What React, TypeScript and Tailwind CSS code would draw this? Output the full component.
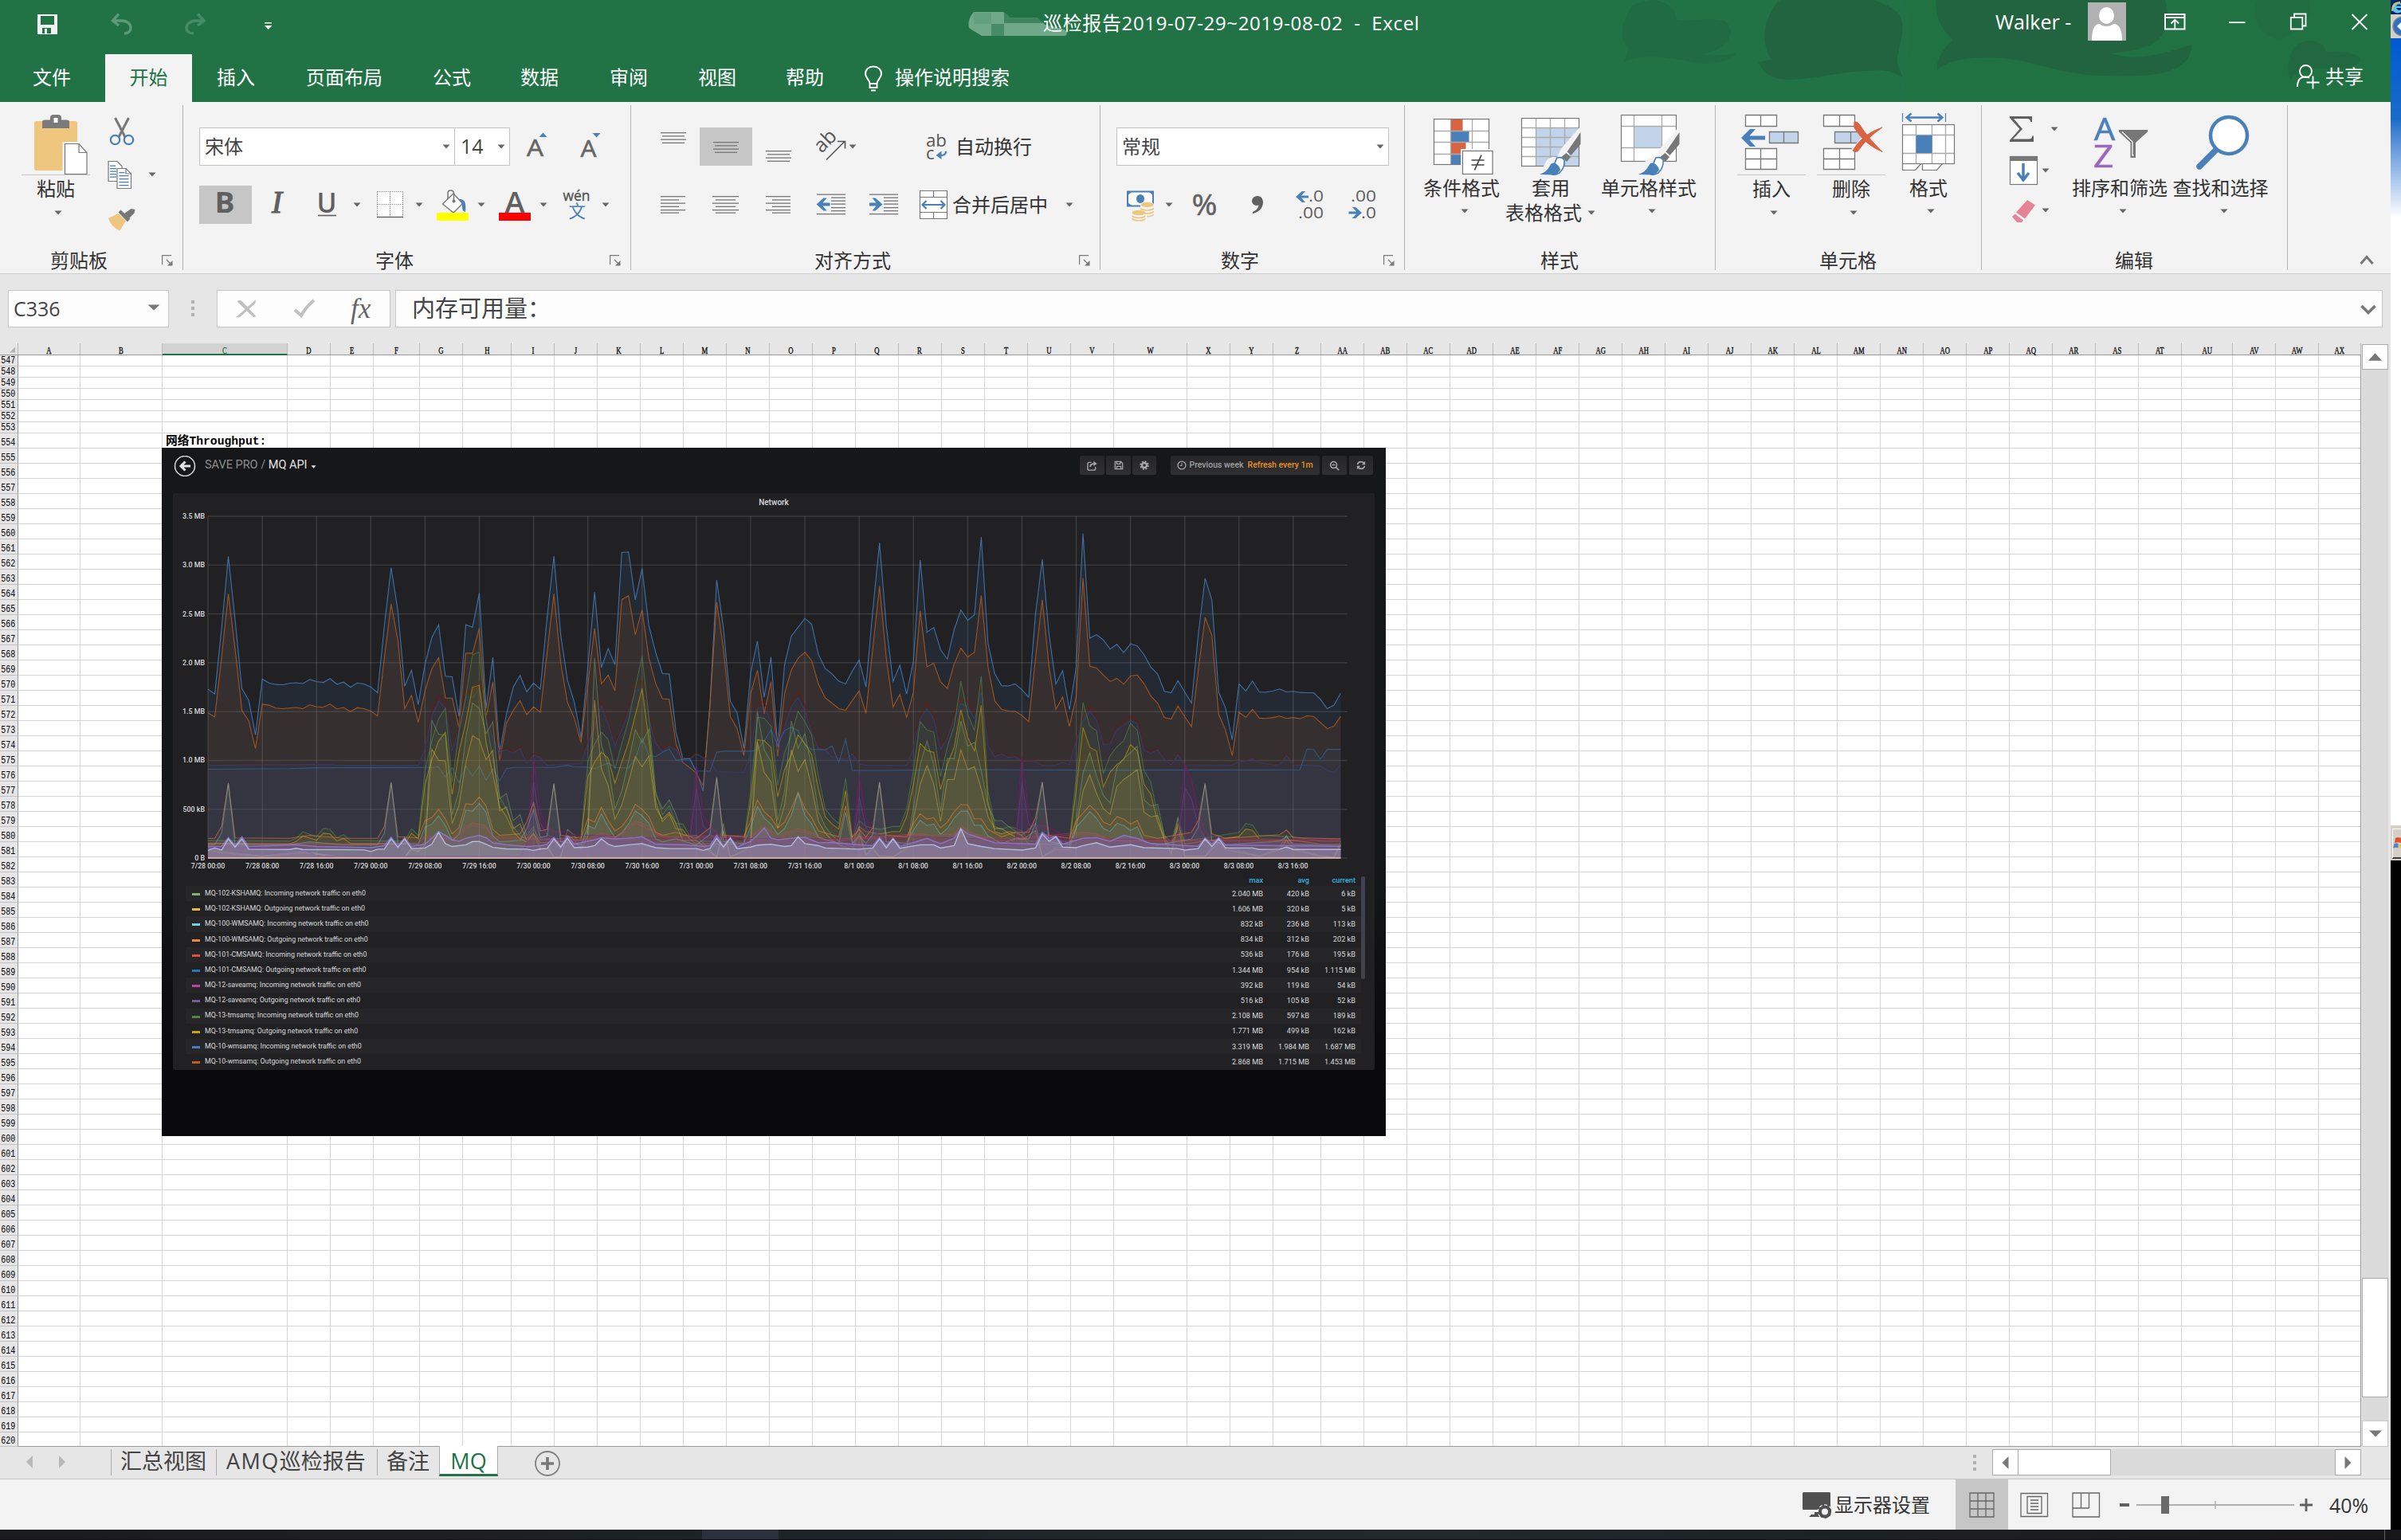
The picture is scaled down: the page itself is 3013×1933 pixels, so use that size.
import React from "react";

type Kids = { children?: React.ReactNode };

/* ---------- shared helpers ---------- */

function Ic({ b, className = "", children }: { b: string; className?: string } & Kids) {
  const [, , w, h] = b.split(" ");
  return (
    <svg viewBox={b} width={w} height={h} className={"block shrink-0 " + className} fill="none">
      {children}
    </svg>
  );
}

function Arrow({ className = "" }: { className?: string }) {
  return (
    <svg viewBox="0 0 12 6" width="12" height="6" className={"block shrink-0 " + className}>
      <path d="M1.5 0.5h9L6 5.5z" fill="#666" />
    </svg>
  );
}

function Lines({ x, ys, w, color = "#777" }: { x: number[]; ys: number[]; w: number[]; color?: string }) {
  return (
    <>
      {ys.map((y, i) => (
        <rect key={i} x={x[i % x.length]} y={y} width={w[i % w.length]} height={1.3} fill={color} />
      ))}
    </>
  );
}

function Launcher({ className = "" }: { className?: string }) {
  return (
    <svg viewBox="0 0 14 14" width="14" height="14" className={"block shrink-0 " + className} fill="none">
      <path d="M0.6 12V0.7H12" stroke="#777" strokeWidth="1.2" />
      <path d="M6 6l6 6" stroke="#777" strokeWidth="1.2" />
      <path d="M13.5 7v6.5H7z" fill="#777" />
    </svg>
  );
}

function Separator() {
  return <div className="h-[207px] w-px shrink-0 bg-[#b4b4b4]" />;
}

function Group({ width, label, labelClass, launcher, children }: { width: string; label: string; labelClass: string; launcher?: string } & Kids) {
  return (
    <section className={"flex h-[211px] shrink-0 flex-col " + width}>
      <div className="h-[180px]">{children}</div>
      <div className="flex h-[29px] items-center">
        <span className={"whitespace-nowrap " + labelClass}>{label}</span>
        {launcher && <Launcher className={launcher} />}
      </div>
    </section>
  );
}

/* ---------- title bar and tabs ---------- */

function TitleArt() {
  return (
    <svg className="absolute left-[2000px] top-0 h-[128px] w-[1000px]" viewBox="0 0 1548 384" preserveAspectRatio="none">
      <path d="M600 0C640 120 590 220 610 384H1548V0z" fill="#20703f" opacity=".45" />
      <path d="M75 20C50 90 50 150 68 185L58 235C90 200 150 215 190 235C230 250 265 230 278 200C250 210 225 212 210 205C270 180 275 110 255 80C220 60 170 90 160 70C160 20 130 0 110 0C95 5 85 10 75 20z" fill="#21663f" opacity=".6" />
      <path d="M352 20C328 90 325 160 345 225L320 235C330 280 350 305 390 299C440 295 470 270 555 265C580 268 590 280 600 292L590 240C585 200 610 120 595 60C585 30 560 10 545 0H362z" fill="#22633f" opacity=".9" />
      <path d="M665 0C662 60 675 110 698 150C680 180 665 220 667 264C690 225 730 215 780 217C850 222 900 285 1010 286C1110 290 1160 260 1161 170C1130 185 1090 215 1050 215C1020 212 1010 205 1005 200C1090 190 1130 140 1110 0z" fill="#22633f" opacity=".9" />
      <path d="M1352 300C1345 240 1350 160 1388 153C1412 155 1420 175 1422 195C1460 190 1490 205 1490 225C1485 260 1440 262 1410 256C1380 260 1360 280 1352 300z" fill="#22633f" opacity=".7" />
      <path d="M1290 0C1275 60 1290 130 1330 150C1370 120 1400 90 1390 0z" fill="#22633f" opacity=".3" />
    </svg>
  );
}

function TitleBar() {
  return (
    <div className="relative flex h-[68px]">
      <Ic b="45 10 30 40" className="ml-[45px] mt-[10px]">
        <path d="M47 18h25v25H47zM51 20v11h17V20zM53 35v7h3v-6h3v6h5v-7z" fill="#f2f2f2" fillRule="evenodd" />
      </Ic>
      <Ic b="135 10 35 40" className="ml-[60px] mt-[10px]">
        <path d="M149 17.5L141.500 26L149 32M142 26h10c9 0 12 5 12 9c0 4-3 7-8 7" stroke="#5c9a78" strokeWidth="3.4" />
      </Ic>
      <Ic b="230 10 35 40" className="ml-[60px] mt-[10px]">
        <path d="M248 17.500L256 26L248 32M256 26h-10c-8 0-12 5-12 9c0 4 3 7 9 7" stroke="#468c66" strokeWidth="3.4" />
      </Ic>
      <Ic b="330 10 16 40" className="ml-[65px] mt-[10px]">
        <path d="M332 28h9v1.500h-9zM332 32h9.500l-4.700 5z" fill="#fff" />
      </Ic>
      <svg viewBox="0 0 125 34" width="125" height="34" className="ml-[868px] mt-[13px] block shrink-0">
        <path d="M8 2H45L52 9H85L98 18L122 24C126 28 125 30 123 32H18L8 26L2 22C0 14 4 6 8 2z" fill="#6fa98a" />
        <path d="M46 2L54 9H88L95 16H60L46 16z" fill="#3e8560" />
        <rect x="30" y="17" width="16" height="15" fill="#478b67" />
        <rect x="8" y="3" width="22" height="14" fill="#62a07f" />
      </svg>
      <div className="-ml-[30px] mt-[11px] h-[36px] whitespace-pre text-[24px] leading-[36px] tracking-[0.65px] text-white">
        巡检报告2019-07-29~2019-08-02{"  -  "}Excel
      </div>
      <div className="absolute left-[2504px] top-0 flex text-white">
        <span className="mt-[9px] w-[116px] text-[25px] leading-[36px]">Walker -</span>
        <Ic b="2620 3 48 48" className="mt-[3px]">
          <rect x="2620" y="3" width="48" height="48" fill="#b1b1b1" />
          <ellipse cx="2643.500" cy="19.500" rx="9.500" ry="10.500" fill="#fff" />
          <path d="M2625 51c0-14 3-21 10-21c4 4 13 4 17 0c8 0 11 8 11 21z" fill="#fff" />
        </Ic>
        <Ic b="2712 10 34 34" className="ml-[44px] mt-[10px]">
          <path d="M2717 18h24.500v18.500H2717zM2717 22h24.500" stroke="#fff" strokeWidth="2" />
          <path d="M2729.300 36V25M2724.500 29.500l4.800-4.800l4.800 4.800" stroke="#fff" strokeWidth="1.800" />
        </Ic>
        <Ic b="2790 10 34 34" className="ml-[44px] mt-[10px]">
          <path d="M2797 28.200h20.500" stroke="#fff" strokeWidth="1.800" />
        </Ic>
        <Ic b="2868 10 34 34" className="ml-[44px] mt-[10px]">
          <path d="M2874.800 21.800h14.500v14.700h-14.500zM2879 21.500v-4h14.500v15h-4" stroke="#fff" strokeWidth="1.800" />
        </Ic>
        <Ic b="2944 10 34 34" className="ml-[42px] mt-[10px]">
          <path d="M2951.500 18l19 19M2970.500 18l-19 19" stroke="#fff" strokeWidth="1.800" />
        </Ic>
      </div>
    </div>
  );
}

function TabBar() {
  return (
    <div className="relative flex h-[60px] text-[24px] leading-[57px] text-white [&>span]:whitespace-nowrap">
      <span className="ml-[41px] w-[91px]">文件</span>
      <span className="h-[60px] w-[109px] bg-[#f3f3f3] text-center text-[#217346]">开始</span>
      <span className="ml-[31px] w-[112px]">插入</span>
      <span className="w-[159px]">页面布局</span>
      <span className="w-[110px]">公式</span>
      <span className="w-[112px]">数据</span>
      <span className="w-[111px]">审阅</span>
      <span className="w-[110px]">视图</span>
      <span className="w-[96px]">帮助</span>
      <Ic b="1082 80 28 38" className="mt-[12px]">
        <path d="M1091.500 105c0-5-5.500-6.500-5.500-12.500c0-5 4-9 10-9s10 4 10 9c0 6-5.500 7.500-5.500 12.500zM1091.500 105v5h9v-5" stroke="#fff" strokeWidth="2" />
        <path d="M1093 113.500h6" stroke="#fff" strokeWidth="2" />
      </Ic>
      <span className="ml-[13px]">操作说明搜索</span>
      <Ic b="2878 78 36 38" className="absolute left-[2878px] top-[10px]">
        <circle cx="2893.500" cy="89.500" r="7.500" stroke="#fff" strokeWidth="1.900" />
        <path d="M2883 109c0-8 3-12.500 10-12.500c2 0 4 .5 5 1.200M2894.500 103.500h16M2902.500 95.500v16" stroke="#fff" strokeWidth="1.900" />
      </Ic>
      <span className="absolute left-[2918px] top-0 leading-[55px]">共享</span>
    </div>
  );
}

/* ---------- ribbon ---------- */

function ClipboardGroup() {
  return (
    <Group width="w-[229px]" label="剪贴板" labelClass="ml-[63px]" launcher="ml-[68px]">
      <div className="flex">
        <div className="ml-[27px] mt-[8px] flex w-[86px] flex-col items-center">
          <Ic b="27 140 86 80">
            <rect x="43" y="152" width="54" height="62" rx="2.500" fill="#eec67e" />
            <path d="M53 153q0-2.500 3-2.500h7v-3q0-3.500 4-3.500h6q4 0 4 3.500v3h7q3 0 3 2.500v8H53z" fill="#7a7a7a" />
            <rect x="67.500" y="148" width="5" height="6" fill="#fff" />
            <path d="M80 179.500h20l10 12V219H80z" fill="#fff" stroke="#f3f3f3" strokeWidth="3" />
            <path d="M81.500 180.500H99l10 11V218.500H81.500zM99 180.500v11h10" fill="#fff" stroke="#777" strokeWidth="1.200" />
            <path d="M27 219.500h86" stroke="#c8c8c8" strokeWidth="1" />
          </Ic>
          <span className="-mt-px h-[36px] leading-[36px]">粘贴</span>
          <Arrow className="ml-[6px] mt-[9px]" />
        </div>
        <div className="ml-[20px] flex flex-col">
          <Ic b="133 140 38 50" className="mt-[8px]">
            <path d="M144.500 148l12.500 24M161.500 148l-12.500 24" stroke="#777" strokeWidth="3" />
            <ellipse cx="144.500" cy="175.500" rx="5.700" ry="5.700" stroke="#4a80b8" strokeWidth="2.200" />
            <ellipse cx="161.500" cy="175.500" rx="5.700" ry="5.700" stroke="#4a80b8" strokeWidth="2.200" />
          </Ic>
          <div className="mt-[4px] flex items-center">
            <Ic b="133 194 38 50">
              <path d="M136 202.500h11l6 6V227.500H136z" fill="#fff" stroke="#777" strokeWidth="1.200" />
              <Lines x={[138]} ys={[207.5, 211, 214.500, 218, 221.500]} w={[7, 8, 8, 8, 8]} color="#4a80b8" />
              <path d="M147 211.500h11l6.500 6.500V236.500H147z" fill="#fff" stroke="#777" strokeWidth="1.200" />
              <path d="M158 211.500v6.500h6" stroke="#777" strokeWidth="1.200" />
              <Lines x={[149.500]} ys={[216, 220, 224, 228, 232]} w={[7, 12, 12, 12, 12]} color="#4a80b8" />
            </Ic>
            <Arrow className="ml-[14px]" />
          </div>
          <Ic b="133 250 38 50" className="mt-[6px]">
            <path d="M136 274l12-6l10 9l-7.500 12.500c-6-2-12-8-14.500-15.500z" fill="#eec67e" />
            <path d="M148.500 266.500l3-3l12 11l-3.500 4z" fill="#777" />
            <path d="M156 268l8.500-6l5 1l-1 4.500l-7 7z" fill="#777" />
          </Ic>
        </div>
      </div>
    </Group>
  );
}

function FontGroup() {
  return (
    <Group width="w-[561px]" label="字体" labelClass="ml-[241px]" launcher="ml-[246px]">
      <div className="flex h-[76px] items-center pt-[28px]">
        <div className="ml-[20px] flex h-[48px] w-[321px] items-center border border-[#c3c3c3] bg-white pl-[6px] text-[24px] text-[#444]">
          宋体
          <Arrow className="ml-auto mr-[4px]" />
        </div>
        <div className="-ml-px flex h-[48px] w-[70px] items-center border border-[#c3c3c3] bg-white pl-[7px] text-[25px] text-[#444]">
          14
          <Arrow className="ml-auto mr-[4px]" />
        </div>
        <Ic b="655 160 40 48" className="ml-[15px]">
          <text x="661" y="196" fontSize="30" fill="#666" textLength="21" lengthAdjust="spacingAndGlyphs" stroke="#666" strokeWidth=".6">A</text>
          <path d="M676.500 172l5-5.500l5 5.500z" fill="#4a80b8" />
        </Ic>
        <Ic b="722 160 40 48" className="ml-[27px]">
          <text x="728.500" y="197" fontSize="29" fill="#666" textLength="20" lengthAdjust="spacingAndGlyphs" stroke="#666" strokeWidth=".6">A</text>
          <path d="M743.500 167h10l-5 5.500z" fill="#4a80b8" />
        </Ic>
      </div>
      <div className="mt-[25px] flex h-[48px] items-center">
        <div className="ml-[20px] flex h-[48px] w-[66px] items-center justify-center bg-[#c6c6c6]">
          <Ic b="250 233 66 48">
            <text x="269.500" y="266.500" fontSize="36" fontWeight="700" fill="#606060" textLength="25" lengthAdjust="spacingAndGlyphs">B</text>
          </Ic>
        </div>
        <Ic b="330 233 36 48" className="ml-[14px]">
          <text x="341" y="267" fontSize="39" fontStyle="italic" fontFamily="Liberation Serif" fill="#606060" stroke="#606060" strokeWidth="1.200">I</text>
        </Ic>
        <Ic b="395 225 32 56" className="-mt-[8px] ml-[29px]">
          <text x="397.500" y="266.500" fontSize="35" fontWeight="600" fill="#606060" textLength="25" lengthAdjust="spacingAndGlyphs">U</text>
          <path d="M399 270.500h23" stroke="#606060" strokeWidth="1.600" />
        </Ic>
        <Arrow className="ml-[15px]" />
        <Ic b="472 233 36 48" className="ml-[18px]">
          <rect x="473.500" y="240.500" width="32" height="32" fill="#fff" />
          <path d="M473.500 240.500h32M473.500 240.500v32M505.500 240.500v32M489.500 240.500v32M473.500 256.500h32" stroke="#888" strokeWidth="1.100" strokeDasharray="1.300 1.300" />
          <path d="M473 272.500h33" stroke="#666" strokeWidth="1.500" />
        </Ic>
        <Arrow className="ml-[12px]" />
        <Ic b="546 233 44 48" className="ml-[14px]">
          <path d="M569 243l11.500 12.500l-11.500 11.500l-13.500-11z" fill="#fff" stroke="#777" strokeWidth="1.400" />
          <path d="M562 250v-8q0-3 3.500-3t4 3v9" stroke="#777" strokeWidth="1.500" />
          <circle cx="569.500" cy="252.500" r="2" fill="#777" />
          <path d="M576 250c8 0 9 5 8 16c-5-1-4-7-4-10z" fill="#4a80b8" />
          <rect x="548" y="267" width="40" height="10" fill="#ff0" />
        </Ic>
        <Arrow className="ml-[8px]" />
        <Ic b="624 225 44 56" className="-mt-[8px] ml-[14px]">
          <text x="633.500" y="267" fontSize="36" fontWeight="600" fill="#606060" textLength="25" lengthAdjust="spacingAndGlyphs">A</text>
          <rect x="626" y="267" width="40" height="10" fill="red" />
        </Ic>
        <Arrow className="ml-[8px]" />
        <Ic b="704 225 40 56" className="-mt-[8px] ml-[16px]">
          <text x="706.500" y="251.500" fontSize="18" fill="#555" textLength="34" lengthAdjust="spacingAndGlyphs" stroke="#555" strokeWidth=".4">wén</text>
          <text x="713.500" y="272.500" fontSize="21.500" fill="#4a80b8">文</text>
        </Ic>
        <Arrow className="ml-[10px]" />
      </div>
    </Group>
  );
}

function AlignGroup() {
  const step = [0, 4.2, 8.5, 12.7];
  const xs = [829, 831, 829, 831];
  const ws = [32, 28, 32, 28];
  const five = [246, 250.3, 254.5, 258.700, 263, 266.500];
  return (
    <Group width="w-[588px]" label="对齐方式" labelClass="ml-[230px]" launcher="ml-[236px]">
      <div className="flex h-[76px] items-center pt-[28px]">
        <Ic b="827 160 36 48" className="ml-[35px]">
          <Lines x={xs} ys={step.map((s) => s + 166)} w={ws} />
        </Ic>
        <div className="ml-[15px] flex h-[48px] w-[66px] justify-center bg-[#c6c6c6]">
          <Ic b="827 160 36 48">
            <Lines x={xs} ys={step.map((s) => s + 178)} w={ws} />
          </Ic>
        </div>
        <Ic b="827 160 36 48" className="ml-[15px]">
          <Lines x={xs} ys={step.map((s) => s + 189)} w={ws} />
        </Ic>
        <Ic b="1022 160 41 48" className="ml-[27px]">
          <text x="0" y="0" fontSize="25" fill="#555" transform="translate(1031 193) rotate(-45)">ab</text>
          <path d="M1037 200.500l23-23M1051 177.500h9.500v9" stroke="#555" strokeWidth="1.600" />
        </Ic>
        <Arrow className="ml-px" />
        <Ic b="1160 160 32 48" className="ml-[84px]">
          <text x="1162" y="183.500" fontSize="22" fill="#555" textLength="26" lengthAdjust="spacingAndGlyphs">ab</text>
          <text x="1162" y="199.500" fontSize="22" fill="#555">c</text>
          <path d="M1187 190q0 5-6 5h-3" stroke="#4a80b8" strokeWidth="2.200" />
          <path d="M1181.500 189.500v10.500l-7-5z" fill="#4a80b8" />
        </Ic>
        <span className="ml-[7px] whitespace-nowrap">自动换行</span>
      </div>
      <div className="mt-[25px] flex h-[48px] items-center">
        <Ic b="827 233 36 48" className="ml-[35px]">
          <Lines x={[829]} ys={five} w={[31, 23]} />
        </Ic>
        <Ic b="892 233 36 48" className="ml-[29px]">
          <Lines x={[894, 898]} ys={five} w={[33, 25]} />
        </Ic>
        <Ic b="959 233 36 48" className="ml-[31px]">
          <Lines x={[961, 969]} ys={five} w={[31, 23]} />
        </Ic>
        <Ic b="1023 233 40 48" className="ml-[28px]">
          <Lines x={[1025, 1043, 1043, 1043, 1043, 1043, 1025]} ys={[243.500, 247.500, 251.500, 255.500, 260, 264, 268]} w={[36, 18, 18, 18, 18, 18, 36]} />
          <path d="M1024.500 256.500l9-8h4l-5 6h9v4h-9l5 6h-4z" fill="#4a80b8" />
        </Ic>
        <Ic b="1089 233 40 48" className="ml-[26px]">
          <Lines x={[1091, 1109, 1109, 1109, 1109, 1109, 1091]} ys={[243.500, 247.500, 251.500, 255.500, 260, 264, 268]} w={[36, 18, 18, 18, 18, 18, 36]} />
          <path d="M1107.500 256.500l-9-8h-4l5 6h-8.500v4h8.500l-5 6h4z" fill="#4a80b8" />
        </Ic>
        <Ic b="1152 233 39 48" className="ml-[23px]">
          <path d="M1154.500 239.500h34v35h-34zM1154.500 247.500h34M1154.500 266.500h34M1171.500 239.500v8M1171.500 266.500v8" fill="#fff" stroke="#777" strokeWidth="1.200" />
          <path d="M1158 257h27M1162.500 252l-5 5l5 5M1180.500 252l5 5l-5 5" stroke="#4a80b8" strokeWidth="2.200" />
        </Ic>
        <span className="ml-[4px] whitespace-nowrap">合并后居中</span>
        <Arrow className="ml-[21px]" />
      </div>
    </Group>
  );
}

function NumberGroup() {
  return (
    <Group width="w-[381px]" label="数字" labelClass="ml-[151px]" launcher="ml-[156px]">
      <div className="flex h-[76px] items-center pt-[28px]">
        <div className="ml-[20px] flex h-[48px] w-[342px] items-center border border-[#c3c3c3] bg-white pl-[6px] text-[24px] text-[#444]">
          常规
          <Arrow className="ml-auto mr-[4px]" />
        </div>
      </div>
      <div className="mt-[25px] flex h-[48px] items-center">
        <Ic b="1412 233 38 48" className="ml-[31px]">
          <rect x="1415" y="240.500" width="32" height="18" fill="#fff" stroke="#4a80b8" strokeWidth="2" />
          <path d="M1415 240.500h5l-5 4zM1447 240.500h-5l5 4zM1415 258.500h5l-5-4z" fill="#4a80b8" stroke="#4a80b8" />
          <ellipse cx="1431" cy="249.500" rx="5" ry="5.500" fill="#4a80b8" />
          <path d="M1431 256.500a8 3 0 0 1 17 0v12a8 3 0 0 1-17 0z" fill="#f3f3f3" />
          <ellipse cx="1439.500" cy="257" rx="8" ry="3" fill="#eec67e" />
          <path d="M1431.500 261a8 3 0 0 0 16 0M1431.500 265a8 3 0 0 0 16 0M1439.500 271.500a8 3 0 0 0 8-2.500" stroke="#eec67e" strokeWidth="1.600" />
          <ellipse cx="1429" cy="267" rx="8.500" ry="3.300" fill="#eec67e" />
          <path d="M1421 270.500a8 3 0 0 0 16 0M1421 274a8 3 0 0 0 16 0" stroke="#eec67e" strokeWidth="1.600" />
        </Ic>
        <Arrow className="ml-[11px]" />
        <Ic b="1494 233 36 48" className="ml-[21px]">
          <text x="1495.500" y="270" fontSize="37" fill="#606060" textLength="32" lengthAdjust="spacingAndGlyphs" stroke="#606060" strokeWidth=".5">%</text>
        </Ic>
        <Ic b="1566 233 24 48" className="ml-[36px]">
          <path d="M1571 252a7 6 0 0 1 7-6c5 0 7 4 7 8c0 8-7 13-13 14v-2c4-1.500 7-4.500 7.500-8.500c-4 1.500-8.500-1-8.500-5.500z" fill="#606060" />
        </Ic>
        <Ic b="1624 225 40 56" className="-mt-[8px] ml-[34px]">
          <text x="1642" y="253" fontSize="20" fill="#606060" textLength="19" lengthAdjust="spacingAndGlyphs">.0</text>
          <text x="1629" y="273.500" fontSize="20" fill="#606060" textLength="32" lengthAdjust="spacingAndGlyphs">.00</text>
          <path d="M1626 247l8-7h4l-5 5.500h9v3h-9l5 5.500h-4z" fill="#4a80b8" />
        </Ic>
        <Ic b="1690 225 40 56" className="-mt-[8px] ml-[26px]">
          <text x="1695" y="253" fontSize="20" fill="#606060" textLength="32" lengthAdjust="spacingAndGlyphs">.00</text>
          <text x="1708" y="273.500" fontSize="20" fill="#606060" textLength="19" lengthAdjust="spacingAndGlyphs">.0</text>
          <path d="M1709 267l-8-7h-4l5 5.500h-9.500v3h9.500l-5 5.500h4z" fill="#4a80b8" />
        </Ic>
      </div>
    </Group>
  );
}

function Brush() {
  return (
    <g>
      <path d="M55 19l2.500 2l-14 28l-8 13l-5 9q-6 9-32 10q8-6 12-15q3-8 11-9l4 1l6-12z" fill="#f3f3f3" />
      <path d="M55.500 26V41L43.500 55l-5-4.500z" fill="#777" />
      <path d="M37.500 52l5.500 5l-5 6l-6.500-6z" fill="#777" />
      <path d="M26 58q7-1.500 9 3q1 9-6 16q-5 3-9 2q2-14 6-21z" fill="#fff" stroke="#4a80b8" strokeWidth="1.600" />
      <path d="M4 79q9-3 13-11q2-5 7-3q5 3 6 8q-3 6-10 6.500z" fill="#4a80b8" />
    </g>
  );
}

function StylesGroup() {
  return (
    <Group width="w-[389px]" label="样式" labelClass="ml-[170px]">
      <div className="flex pt-[8px]">
        <div className="ml-[20px] flex w-[102px] flex-col items-center">
          <Ic b="1794 140 80 80">
            <rect x="1799.500" y="149.500" width="69" height="57" fill="#fff" />
            <rect x="1820.500" y="150" width="15" height="14" fill="#da6341" />
            <rect x="1820.500" y="165" width="23" height="13" fill="#4a80b8" />
            <rect x="1820.500" y="179" width="19" height="14" fill="#da6341" />
            <rect x="1820.500" y="194" width="14" height="12" fill="#4a80b8" />
            <path d="M1820.500 149.500v57M1847.500 149.500v57M1799.500 164.500h69M1799.500 178.500h69M1799.500 193.500h69" stroke="#aaa" strokeWidth="1.300" />
            <rect x="1799.500" y="149.500" width="69" height="57" stroke="#777" strokeWidth="1.200" />
            <rect x="1833" y="187" width="42" height="33" fill="#f3f3f3" />
            <rect x="1835.500" y="189.500" width="37.500" height="29" fill="#fff" stroke="#777" strokeWidth="1.200" />
            <path d="M1846.500 201h16M1846.500 207h16M1859 194.500l-8.500 19" stroke="#444" strokeWidth="1.700" />
          </Ic>
          <span className="mt-px h-[30px] whitespace-nowrap leading-[29px]">条件格式</span>
          <Arrow className="ml-[8px] mt-[11px]" />
        </div>
        <div className="ml-[4px] flex w-[114px] flex-col items-center">
          <Ic b="1896 140 100 80">
            <rect x="1909.500" y="148.500" width="72" height="60" fill="#fff" />
            <rect x="1928" y="161" width="53" height="47" fill="#c1d4e9" />
            <path d="M1927.500 148.500v60M1945.500 148.500v60M1963.500 148.500v60M1909.500 160.500h72M1909.500 172.500h72M1909.500 184.500h72M1909.500 196.500h72" stroke="#aaa" strokeWidth="1.300" />
            <rect x="1909.500" y="148.500" width="72" height="60" stroke="#777" strokeWidth="1.200" />
            <g transform="translate(1928 140)">
              <Brush />
            </g>
          </Ic>
          <span className="mt-px h-[30px] leading-[29px]">套用</span>
          <span className="flex h-[32px] w-full items-center justify-between whitespace-nowrap leading-[32px]">
            表格格式
            <Arrow />
          </span>
        </div>
        <div className="ml-[6px] flex w-[120px] flex-col items-center">
          <Ic b="2027 140 84 80">
            <rect x="2034.500" y="144.500" width="69" height="58" fill="#fff" />
            <rect x="2050.500" y="159" width="35" height="26" fill="#c1d4e9" />
            <path d="M2050.500 144.500v58M2085.500 144.500v58M2034.500 158.500h69M2034.500 185.500h69" stroke="#aaa" strokeWidth="1.300" />
            <rect x="2034.500" y="144.500" width="69" height="58" stroke="#777" strokeWidth="1.200" />
            <g transform="translate(2052 140)">
              <Brush />
            </g>
          </Ic>
          <span className="mt-px h-[30px] whitespace-nowrap leading-[29px]">单元格样式</span>
          <Arrow className="ml-[8px] mt-[11px]" />
        </div>
      </div>
    </Group>
  );
}

function CellsGroup() {
  return (
    <Group width="w-[333px]" label="单元格" labelClass="ml-[130px]">
      <div className="flex pt-[8px]">
        <div className="ml-[27px] flex w-[86px] flex-col items-center">
          <Ic b="2180 140 86 80">
            <path d="M2190.500 144.500h39v14h-39zM2209.500 144.500v14M2190.500 186.500h39v26h-39zM2190.500 199.500h39M2209.500 186.500v26" fill="#fff" stroke="#777" strokeWidth="1.300" />
            <path d="M2220.500 165.500h36v14h-36zM2238.500 165.500v14" fill="#c1d4e9" stroke="#777" strokeWidth="1.300" />
            <path d="M2185 173l11-11h7l-7.500 8.500H2215v5h-19.500l7.500 8.500h-7z" fill="#4a80b8" />
            <path d="M2180 219.500h86" stroke="#c8c8c8" />
          </Ic>
          <span className="-mt-px h-[36px] leading-[36px]">插入</span>
          <Arrow className="ml-[6px] mt-[9px]" />
        </div>
        <div className="ml-[14px] flex w-[86px] flex-col items-center">
          <Ic b="2280 140 86 80">
            <path d="M2288.500 144.500h39v14h-39zM2308.500 144.500v14M2288.500 186.500h39v26h-39zM2288.500 199.500h39M2308.500 186.500v26" fill="#fff" stroke="#777" strokeWidth="1.300" />
            <path d="M2302.500 165.500h34v14h-34zM2322.500 165.500v14" fill="#c1d4e9" stroke="#777" strokeWidth="1.300" />
            <path d="M2330 158l31 32M2361 161q-20 10-34 29" stroke="#f3f3f3" strokeWidth="9" />
            <path d="M2327 153q4-1 7 4q10 16 28 33.500q-22-9-35-30zM2362 160q-18 12-31 30q-3 1.500-6-1q12-21 37-29z" fill="#da6341" stroke="#da6341" strokeWidth="1" />
            <path d="M2280 219.500h86" stroke="#c8c8c8" />
          </Ic>
          <span className="-mt-px h-[36px] leading-[36px]">删除</span>
          <Arrow className="ml-[6px] mt-[9px]" />
        </div>
        <div className="ml-[14px] flex w-[80px] flex-col items-center">
          <Ic b="2380 140 80 80">
            <path d="M2387.500 142v11M2441.500 142v11" stroke="#4a80b8" strokeWidth="1.200" />
            <path d="M2393 147.500h44M2398.500 142.500l-6 5l6 5M2431.500 142.500l6 5l-6 5" stroke="#4a80b8" strokeWidth="2.400" />
            <path d="M2387.500 205.500v8h16l7-8h2v8h18l7-8z" fill="#fff" stroke="#777" strokeWidth="1.200" />
            <rect x="2387.500" y="156.500" width="65" height="49" fill="#fff" />
            <path d="M2404.500 156.500v49M2424.500 156.500v49M2441.500 156.500v49M2387.500 169.500h65M2387.500 192.500h65" stroke="#aaa" strokeWidth="1.300" />
            <rect x="2387.500" y="156.500" width="65" height="49" stroke="#777" strokeWidth="1.200" />
            <rect x="2404.500" y="170" width="20" height="22" fill="#4a80b8" />
          </Ic>
          <span className="mt-px h-[30px] leading-[29px]">格式</span>
          <Arrow className="ml-[6px] mt-[11px]" />
        </div>
      </div>
    </Group>
  );
}

function EditGroup() {
  return (
    <Group width="w-[383px]" label="编辑" labelClass="ml-[167px]">
      <div className="flex pt-[8px]">
        <div className="ml-[32px] w-[81px]">
          <div className="flex h-[44px] items-center">
            <Ic b="2519 140 34 44">
              <path d="M2522 146h28v7h-2q0-4-4-4h-17l11 13l-12 12.500h20q4 0 4.500-4h1.500v7.500h-30v-2l12.500-14l-12.500-14z" fill="#606060" />
            </Ic>
            <Arrow className="ml-[19px]" />
          </div>
          <div className="mt-[8px] flex h-[44px] items-center">
            <Ic b="2519 192 40 44">
              <rect x="2522.500" y="196.500" width="34" height="35" fill="#fff" stroke="#777" strokeWidth="1.200" />
              <rect x="2522" y="196" width="35" height="6" fill="#777" />
              <path d="M2539 205v20M2532 217l7 9l7-9" stroke="#4a80b8" strokeWidth="3.400" />
            </Ic>
            <Arrow className="ml-[2px]" />
          </div>
          <div className="mt-[6px] flex h-[44px] items-center">
            <Ic b="2519 242 40 44">
              <path d="M2544 251l10 6.500l-13 17l-11-8z" fill="#e58496" />
              <path d="M2528.500 268.500l10.500 8l-2 2.500h-6l-6-7z" fill="#e58496" />
            </Ic>
            <Arrow className="ml-[2px]" />
          </div>
        </div>
        <div className="flex w-[120px] flex-col items-center">
          <Ic b="2610 132 100 88" className="-mt-[8px]">
            <text x="2628" y="176" fontSize="38" fill="#4a80b8" textLength="26" lengthAdjust="spacingAndGlyphs" stroke="#4a80b8" strokeWidth=".7">A</text>
            <text x="2627" y="210" fontSize="38" fill="#9a67b8" textLength="25" lengthAdjust="spacingAndGlyphs" stroke="#9a67b8" strokeWidth=".7">Z</text>
            <path d="M2659 163h36v2.500l-15 13.500V198h-6.500V179L2659 165.500z" fill="#777" />
            <path d="M2663 165.500l13 12.500V195h1.500" stroke="#fff" strokeWidth="1.300" />
          </Ic>
          <span className="mt-px h-[30px] whitespace-nowrap leading-[29px]">排序和筛选</span>
          <Arrow className="ml-[8px] mt-[11px]" />
        </div>
        <div className="ml-[6px] flex w-[121px] flex-col items-center">
          <Ic b="2746 140 80 80">
            <path d="M2781 187l-22 22" stroke="#4a80b8" strokeWidth="7.500" strokeLinecap="round" />
            <circle cx="2796" cy="170" r="23" fill="#fff" stroke="#4a80b8" strokeWidth="4.500" />
          </Ic>
          <span className="mt-px h-[30px] whitespace-nowrap leading-[29px]">查找和选择</span>
          <Arrow className="ml-[8px] mt-[11px]" />
        </div>
      </div>
    </Group>
  );
}

function Ribbon() {
  return (
    <div className="flex h-[216px] border-b border-[#cfcfcf] bg-[#f3f3f3] pt-[4px] text-[24px] text-[#333]">
      <ClipboardGroup />
      <Separator />
      <FontGroup />
      <Separator />
      <AlignGroup />
      <Separator />
      <NumberGroup />
      <Separator />
      <StylesGroup />
      <Separator />
      <CellsGroup />
      <Separator />
      <EditGroup />
      <Separator />
      <Ic b="2958 316 24 20" className="ml-[87px] mt-[184px]">
        <path d="M2962.500 331l7.500-8.500l7.500 8.500" stroke="#777" strokeWidth="3" />
      </Ic>
    </div>
  );
}

/* ---------- formula bar ---------- */

function FormulaBar() {
  return (
    <div className="flex h-[87px] bg-[#e6e6e6] pt-[20px] text-[#444]">
      <div className="ml-[10px] flex h-[47px] w-[202px] items-center border border-[#c6c6c6] bg-[#fdfdfd] pl-[6px] pt-px text-[25px]">
        C336
        <svg viewBox="0 0 16 8" width="16" height="8" className="mb-[5px] ml-auto mr-[10px]">
          <path d="M0.500 0.500h15L8 7.500z" fill="#777" />
        </svg>
      </div>
      <div className="ml-[28px] mt-[13px] flex w-[4px] flex-col gap-[4px]">
        <i className="h-[4px] w-[4px] bg-[#b0b0b0]" />
        <i className="h-[4px] w-[4px] bg-[#b0b0b0]" />
        <i className="h-[4px] w-[4px] bg-[#b0b0b0]" />
      </div>
      <div className="ml-[28px] flex h-[47px] w-[218px] items-center border border-[#c6c6c6] bg-[#fdfdfd]">
        <Ic b="296 374 28 28" className="ml-[23px]">
          <path d="M298 378.500q4-2 6 1l16 17l-1.500 1l-20-19zM320 378l-22 19.500h2.500l19-17z" fill="#c0c0c0" stroke="#c0c0c0" strokeWidth="1.500" />
        </Ic>
        <Ic b="366 374 32 28" className="ml-[42px]">
          <path d="M370 389l8 7q6-11 16-19" stroke="#c0c0c0" strokeWidth="4" />
        </Ic>
        <span className="ml-[42px] font-['Liberation_Serif'] text-[35px] italic leading-[38px] text-[#666]">fx</span>
      </div>
      <div className="ml-[6px] flex h-[47px] w-[2494px] items-center border border-[#c6c6c6] bg-[#fdfdfd] pl-[20px] text-[29px] leading-[44px]">
        <span className="-mt-[2px]">内存可用量：</span>
        <Ic b="2960 374 26 24" className="ml-auto mr-[4px]">
          <path d="M2964.500 382l8.500 8.500l8.500-8.500" stroke="#777" strokeWidth="3.600" />
        </Ic>
      </div>
    </div>
  );
}

/* ---------- dashboard picture ---------- */

const FLOOR = 1477;
type Pt = [number, number];

const parse = (s: string): Pt[] => s.trim().split(/\s+/).map((p) => p.split(":").map(Number) as Pt);
const scale = (pts: Pt[], k: number): Pt[] => pts.map(([h, y]) => [h, FLOOR - (FLOOR - y) * k]);

const wmsIn = parse(`0:905 1:921 2:700 3:455 4:670 5:903 6:942 7:1060 8:871 9:884 10:889 11:890 12:885 13:883 14:886 15:872 16:879 17:882 18:869 19:888 20:881 21:898 22:884 23:887 24:897 25:917 26:690 27:493 28:640 29:895 30:841 31:957 32:820 33:730 34:687 35:861 36:863 37:997 38:687 39:695 40:580 41:970 42:797 43:1118 44:990 45:898 46:858 47:914 48:884 49:905 50:660 51:454 52:720 53:875 54:948 55:1070 56:830 57:576 58:832 59:767 60:822 61:442 62:440 63:602 64:496 65:690 66:780 67:852 68:853 69:1050 70:1140 71:1140 72:1185 73:1250 74:960 75:535 76:700 77:945 78:985 79:1105 80:850 81:742 82:932 83:796 84:1100 85:822 86:725 87:695 88:665 89:685 90:787 91:835 92:853 93:878 94:887 95:843 96:806 97:897 98:640 99:409 100:690 101:878 102:824 103:921 104:810 105:467 106:712 107:696 108:771 109:803 110:703 111:637 112:672 113:653 114:389 115:750 116:853 117:893 118:894 119:887 120:907 121:932 122:650 123:465 124:720 125:887 126:842 127:975 128:830 129:377 130:732 131:720 132:738 133:769 134:753 135:781 136:751 137:758 138:788 139:830 140:853 141:912 142:917 143:876 144:914 145:952 146:720 147:529 148:602 149:915 150:967 151:1076 152:887 153:911 154:877 155:915 156:915 157:911 158:904 159:914 160:912 161:916 162:917 163:917 164:939 165:971 166:959 167:918`);
const wmsOut = parse(`0:985 1:999 2:800 3:582 4:770 5:977 6:1012 7:1106 8:956 9:959 10:969 11:971 12:969 13:967 14:971 15:958 16:964 17:966 18:955 19:972 20:967 21:981 22:968 23:971 24:979 25:996 26:800 27:616 28:740 29:971 30:926 31:1018 32:910 33:836 34:798 35:935 36:935 37:1035 38:783 39:783 40:698 41:1000 42:880 43:1147 44:1020 45:977 46:944 47:991 48:965 49:983 50:780 51:582 52:815 53:950 54:1003 55:1086 56:890 57:699 58:887 59:857 60:910 61:601 62:588 63:720 64:636 65:800 66:885 67:937 68:939 69:1090 70:1153 71:1170 72:1190 73:1232 74:960 75:610 76:770 77:997 78:1038 79:1130 80:920 81:841 82:988 83:880 84:1133 85:920 86:840 87:800 88:780 89:808 90:888 91:934 92:952 93:971 94:976 95:943 96:911 97:987 98:770 99:556 100:800 101:965 102:923 103:1000 104:915 105:640 106:829 107:817 108:880 109:902 110:820 111:766 112:796 113:780 114:588 115:830 116:945 117:973 118:979 119:980 120:994 121:1015 122:800 123:602 124:830 125:973 126:931 127:1031 128:930 129:528 130:827 131:833 132:857 133:879 134:868 135:888 136:860 137:857 138:886 139:928 140:952 141:1001 142:1006 143:962 144:998 145:1032 146:840 147:662 148:722 149:990 150:1042 151:1130 152:983 153:1000 154:973 155:1003 156:1004 157:1001 158:996 159:1004 160:1001 161:1005 162:995 163:997 164:1018 165:1039 166:1030 167:997`);
const cmsOut = parse(`0:1176 12:1174 16:1171 33:1170 34:1168 35:1203 36:1170 37:1222 38:1165 39:1199 40:1165 41:1213 42:1175 43:1215 44:1174 45:1170 51:1170 53:1163 54:1168 56:1169 57:1174 59:1155 60:1170 62:1172 63:1140 64:1070 65:1130 66:1133 67:1119 68:1108 69:1146 71:1140 72:1182 74:1182 75:1118 76:1115 80:1115 81:1110 82:1080 83:1043 84:1095 85:1045 86:1033 87:1045 88:1095 89:1109 91:1110 92:1097 93:1152 94:1075 95:1180 100:1180 110:1177 130:1179 161:1178 162:1108 163:1109 164:1142 165:1109 167:1109`);
const redUpper = parse(`0:1163 18:1158 20:1163 31:1163 32:1100 33:980 34:925 35:950 36:1110 37:1030 38:910 39:912 40:880 41:990 42:1060 43:1112 44:1105 45:1118 46:1100 47:1155 48:1124 49:1133 50:1163 55:1155 56:1080 57:1020 58:943 59:1010 60:1090 61:1030 62:965 63:890 64:878 65:990 66:1080 67:1112 68:1092 69:1105 70:1140 71:1140 72:1120 73:1135 74:1145 75:1185 79:1186 80:1120 81:950 82:948 83:1000 84:1090 85:1020 86:945 87:913 88:960 89:1040 90:1100 91:1105 92:1130 93:1135 94:1140 95:1120 96:1155 97:1163 103:1163 104:1100 105:990 106:953 107:990 108:1103 109:1060 110:990 111:935 112:945 113:990 114:892 115:1090 116:1130 117:1120 118:1133 119:1130 120:1146 122:1148 123:1163 125:1162 126:1150 127:1160 128:1070 129:1000 130:962 131:995 132:1085 133:1083 134:1030 135:1015 136:997 137:1008 138:1105 139:1118 140:1105 141:1140 142:1160 143:1122 144:1160 151:1163 152:1147 153:1147 154:1137 155:1152 157:1160 158:1160 159:1125 160:1160 164:1165 165:1180 166:1187 167:1160`);
const blueUnderRed = redUpper.map(([h, y]) => [h, y < 1163 ? y + 1 + (1163 - y) * 0.08 : y] as Pt);
const tmsIn = parse(`0:1418 12:1420 13:1410 14:1388 16:1405 17:1377 18:1380 19:1408 20:1398 21:1418 29:1420 30:1378 31:1400 32:1180 33:1080 34:1005 35:970 36:1220 37:1050 38:930 39:788 40:780 41:1010 42:1140 43:1270 44:1310 45:1370 46:1400 47:1412 48:1380 49:1415 55:1405 56:1150 57:1090 58:1050 59:1075 60:1175 61:1090 62:1010 63:900 64:793 65:1000 66:1250 67:1330 68:1300 69:1360 70:1362 71:1400 72:1420 79:1420 80:1250 81:1000 82:1003 83:1030 84:1230 85:1120 86:1060 87:980 88:1015 89:1060 90:1200 91:1310 92:1340 93:1360 94:1205 95:1410 96:1350 97:1370 99:1380 101:1370 102:1370 103:1310 104:1180 105:1015 106:1043 107:1050 108:1200 109:1100 110:1030 111:878 112:990 113:1045 114:860 115:1250 116:1370 117:1380 118:1370 119:1375 120:1385 121:1420 127:1420 128:1200 129:950 130:1030 131:1045 132:1190 133:1130 134:1100 135:1080 136:1020 137:1045 138:1180 139:1220 140:1330 141:1400 142:1425 143:1340 144:1420 152:1390 153:1360 154:1365 155:1400 160:1405 164:1420 167:1420`);
const kshIn = parse(`0:1442 2:1455 8:1470 14:1455 20:1474 29:1474 30:1440 31:1450 32:1420 33:1010 34:1058 35:1060 36:1330 37:1250 38:1070 39:952 40:970 41:1055 42:1015 43:1275 44:1258 45:1350 46:1330 47:1400 48:1370 49:1440 50:1430 51:1474 52:1472 53:1380 54:1400 55:1440 56:1380 57:800 58:1095 59:1165 60:1310 61:1250 62:1150 63:1042 64:1085 65:1040 66:1260 67:1310 68:1280 69:1330 70:1400 72:1400 74:1450 75:1472 76:1360 77:1472 79:1450 80:1420 81:980 82:1110 83:1150 84:1350 85:1250 86:1013 87:1105 88:1055 89:1170 90:1320 91:1370 92:1400 93:1420 95:1440 96:1370 97:1465 98:1440 99:1470 101:1472 103:1440 104:1310 105:1160 106:1080 107:1160 108:1320 109:1140 110:1140 111:1013 112:1098 113:1085 114:1180 115:1300 116:1350 117:1350 118:1370 120:1400 122:1360 123:1472 125:1440 127:1440 128:1350 129:1190 130:1120 131:1200 132:1265 133:1290 134:1170 135:1140 136:1120 137:1098 138:1280 139:1300 140:1295 141:1400 142:1460 143:1340 144:1470 147:1470 149:1410 150:1440 155:1470 158:1440 159:1400 160:1440 164:1470 166:1474 167:1420`);
const wms100 = parse(`0:1410 1:1410 2:1370 3:1223 4:1409 12:1410 15:1400 20:1410 25:1410 26:1370 27:1220 28:1405 31:1408 32:1350 33:1340 34:1312 35:1345 36:1395 37:1375 38:1293 39:1296 40:1270 41:1300 42:1380 43:1400 46:1395 47:1355 48:1290 49:1385 50:1380 51:1224 52:1400 55:1410 56:1345 57:1355 58:1305 59:1350 60:1385 61:1370 62:1340 63:1295 64:1312 65:1337 66:1390 67:1400 69:1390 72:1410 74:1375 75:1203 76:1400 79:1405 80:1350 81:1280 82:1320 83:1340 84:1375 85:1355 86:1310 87:1255 88:1310 89:1340 90:1385 93:1405 94:1300 95:1405 96:1380 97:1405 98:1375 99:1219 100:1400 103:1405 104:1360 105:1327 106:1345 107:1340 108:1375 109:1355 110:1320 111:1296 112:1296 113:1344 114:1344 115:1380 117:1405 119:1390 121:1390 122:1340 123:1219 124:1400 127:1410 128:1350 129:1325 130:1298 131:1320 132:1355 133:1365 134:1337 135:1345 136:1362 137:1350 138:1400 140:1410 145:1390 146:1350 147:1224 148:1395 150:1410 158:1398 159:1382 160:1408 167:1412`);
const save = parse(`0:1440 14:1445 16:1470 46:1472 47:1430 48:1135 49:1320 50:1370 51:1388 53:1388 54:1400 60:1400 61:1408 70:1410 71:1400 72:1160 73:1330 74:1370 75:1390 76:1410 94:1412 95:1430 96:1200 97:1340 98:1380 99:1400 118:1415 119:1430 120:1135 121:1320 122:1370 123:1365 125:1385 127:1412 142:1415 143:1390 144:1160 145:1210 146:1330 147:1385 148:1412 167:1415`);
const redFlat = parse(`0:1426 20:1428 31:1425 32:1400 36:1410 38:1370 39:1358 41:1368 42:1405 56:1415 58:1390 60:1410 63:1350 65:1370 66:1390 68:1405 80:1400 82:1370 84:1400 87:1378 89:1390 91:1415 105:1395 107:1400 110:1395 111:1370 113:1395 116:1415 129:1390 131:1395 133:1415 150:1416 167:1415`);
const lavender = parse(`0:1438 2:1438 3:1408 4:1435 5:1405 6:1438 13:1432 16:1438 24:1442 26:1435 27:1407 28:1436 29:1408 30:1438 32:1430 33:1410 34:1387 35:1400 36:1415 37:1420 38:1410 39:1405 40:1400 41:1408 42:1425 44:1432 47:1438 49:1435 50:1430 51:1407 52:1436 53:1403 54:1430 57:1415 58:1408 60:1412 63:1408 64:1405 66:1430 70:1432 73:1437 74:1435 75:1400 76:1437 77:1407 78:1440 80:1420 81:1400 82:1375 83:1410 84:1415 86:1410 88:1407 90:1425 92:1425 98:1435 99:1408 100:1435 101:1410 102:1437 103:1432 106:1410 108:1428 110:1410 111:1378 112:1395 114:1410 116:1425 122:1430 123:1390 124:1410 125:1403 126:1430 129:1410 131:1408 133:1420 135:1400 137:1410 139:1428 146:1437 147:1410 148:1430 149:1408 150:1433 167:1437`);
const paleBlue = parse(`0:1451 1:1443 2:1450 3:1412 4:1440 5:1412 6:1447 12:1448 13:1444 14:1448 23:1449 24:1455 25:1447 26:1447 27:1412 28:1441 29:1412 30:1445 32:1443 33:1430 34:1390 35:1428 36:1438 38:1432 39:1421 40:1421 41:1430 42:1441 44:1446 47:1447 48:1451 49:1446 50:1445 51:1412 52:1440 53:1410 54:1442 56:1440 57:1435 58:1412 59:1430 60:1438 62:1432 64:1428 66:1442 68:1445 72:1445 73:1451 74:1445 75:1410 76:1440 77:1410 78:1445 80:1440 81:1433 83:1430 85:1438 86:1435 87:1405 88:1428 90:1435 91:1443 96:1447 98:1443 99:1412 100:1442 101:1412 102:1444 105:1432 107:1432 108:1443 110:1435 111:1378 112:1428 114:1438 116:1445 120:1450 122:1443 123:1395 124:1420 125:1405 126:1440 128:1442 129:1435 131:1425 133:1440 136:1432 138:1442 143:1445 144:1450 146:1445 147:1412 148:1438 149:1412 150:1443 154:1443 155:1448 158:1447 159:1440 160:1448 167:1448`);

const SERIES: { pts: Pt[]; color: string; fill: number; width?: number; line?: number }[] = [
  { pts: wmsIn, color: "#447EBC", fill: 0.1, line: 0.85 },
  { pts: wmsOut, color: "#C15C17", fill: 0.11, line: 0.8 },
  { pts: redUpper, color: "#890F02", fill: 0.05, line: 0.6 },
  { pts: blueUnderRed, color: "#1d4a8c", fill: 0.12, line: 0.7 },
  { pts: cmsOut, color: "#2f72b4", fill: 0.07, line: 0.6 },
  { pts: tmsIn, color: "#508642", fill: 0.1, line: 0.65 },
  { pts: scale(tmsIn, 0.84), color: "#CCA300", fill: 0.11, line: 0.6 },
  { pts: kshIn, color: "#7EB26D", fill: 0.07, line: 0.45 },
  { pts: scale(kshIn, 0.79), color: "#EAB839", fill: 0.07, line: 0.45 },
  { pts: save, color: "#6D1F62", fill: 0.2, line: 0.9 },
  { pts: scale(save, 0.75), color: "#584477", fill: 0.15, line: 0.7 },
  { pts: wms100, color: "#EF843C", fill: 0.06, line: 0.55 },
  { pts: wms100.map(([h, y]) => [h, y < 1260 ? y + 2 : y + 22] as Pt), color: "#6ED0E0", fill: 0.08, line: 0.4 },
  { pts: redFlat, color: "#E24D42", fill: 0.05, line: 0.35 },
  { pts: scale(redFlat, 0.93), color: "#BA43A9", fill: 0.05, line: 0.35 },
  { pts: lavender, color: "#8F77D8", fill: 0.24, line: 0.85, width: 1.5 },
  { pts: paleBlue, color: "#B4C0E0", fill: 0.26, line: 0.95, width: 1.4 },
];

const Y_LABELS = ["3.5 MB", "3.0 MB", "2.5 MB", "2.0 MB", "1.5 MB", "1.0 MB", "500 kB", "0 B"];
const DAYS = ["7/28", "7/29", "7/30", "7/31", "8/1", "8/2", "8/3"];
const X_LABELS = DAYS.flatMap((d) => ["00:00", "08:00", "16:00"].map((t) => `${d} ${t}`));

const LEGEND: [string, string, string, string, string][] = [
  ["#7EB26D", "MQ-102-KSHAMQ: Incoming network traffic on eth0", "2.040 MB", "420 kB", "6 kB"],
  ["#EAB839", "MQ-102-KSHAMQ: Outgoing network traffic on eth0", "1.606 MB", "320 kB", "5 kB"],
  ["#6ED0E0", "MQ-100-WMSAMQ: Incoming network traffic on eth0", "832 kB", "236 kB", "113 kB"],
  ["#EF843C", "MQ-100-WMSAMQ: Outgoing network traffic on eth0", "834 kB", "312 kB", "202 kB"],
  ["#E24D42", "MQ-101-CMSAMQ: Incoming network traffic on eth0", "536 kB", "176 kB", "195 kB"],
  ["#1F78C1", "MQ-101-CMSAMQ: Outgoing network traffic on eth0", "1.344 MB", "954 kB", "1.115 MB"],
  ["#BA43A9", "MQ-12-saveamq: Incoming network traffic on eth0", "392 kB", "119 kB", "54 kB"],
  ["#705DA0", "MQ-12-saveamq: Outgoing network traffic on eth0", "516 kB", "105 kB", "52 kB"],
  ["#508642", "MQ-13-tmsamq: Incoming network traffic on eth0", "2.108 MB", "597 kB", "189 kB"],
  ["#CCA300", "MQ-13-tmsamq: Outgoing network traffic on eth0", "1.771 MB", "499 kB", "162 kB"],
  ["#447EBC", "MQ-10-wmsamq: Incoming network traffic on eth0", "3.319 MB", "1.984 MB", "1.687 MB"],
  ["#C15C17", "MQ-10-wmsamq: Outgoing network traffic on eth0", "2.868 MB", "1.715 MB", "1.453 MB"],
];

function Chart() {
  return (
    <svg viewBox="0 319 168 1158" preserveAspectRatio="none" width="1430" height="429" className="block shrink-0 overflow-visible">
      {Y_LABELS.map((l, i) => (
        <path key={l} d={`M0 ${319 + (i * 1158) / 7}H168`} stroke="#fff" strokeOpacity=".11" strokeWidth="1.500" vectorEffect="non-scaling-stroke" />
      ))}
      {X_LABELS.map((l, i) => (
        <path key={l} d={`M${i * 8} 319V1477`} stroke="#fff" strokeOpacity=".15" strokeWidth="1.200" vectorEffect="non-scaling-stroke" />
      ))}
      {SERIES.map((s, i) => {
        const d = s.pts.map(([h, y]) => `${h} ${y.toFixed(1)}`).join("L");
        return (
          <g key={i}>
            <path d={`M${d}L167 ${FLOOR}L0 ${FLOOR}Z`} fill={s.color} fillOpacity={s.fill} />
            <path d={`M${d}`} fill="none" stroke={s.color} strokeOpacity={s.line ?? 1} strokeWidth={s.width ?? 1.1} vectorEffect="non-scaling-stroke" />
          </g>
        );
      })}
      <path d="M0 1477H167" stroke="#e8c8b4" strokeWidth="1.600" vectorEffect="non-scaling-stroke" />
    </svg>
  );
}

function ToolButton({ className = "", children }: { className?: string } & Kids) {
  return <div className={"flex h-[24px] items-center justify-center rounded-[2px] bg-gradient-to-b from-[#262628] to-[#303032] " + className}>{children}</div>;
}

function Dashboard() {
  return (
    <div className="absolute left-[203px] top-[131px] flex h-[864px] w-[1536px] flex-col bg-gradient-to-b from-[#161719] from-60% to-[#09090b] to-90% font-['Roboto'] text-[#d8d9da]">
      <div className="flex h-[57px] items-start pt-[10px]">
        <Ic b="0 0 30 26" className="ml-[14px]">
          <circle cx="15" cy="13" r="12.500" stroke="#d8d9da" strokeWidth="1.500" />
          <path d="M22 13H11M15.500 7.500L10 13l5.500 5.500" stroke="#e4e4e4" strokeWidth="3" />
        </Ic>
        <div className="ml-[10px] flex h-[24px] items-center whitespace-pre text-[14.500px]">
          <span className="text-[#8e8e8e]">SAVE PRO / </span>
          <span className="text-[#e4e4e4]">MQ API</span>
          <svg viewBox="0 0 8 4" width="7" height="4" className="ml-[4px] mt-[3px]">
            <path d="M0.500 0h7L4 4z" fill="#e4e4e4" />
          </svg>
        </div>
        <div className="ml-auto mr-[16px] flex">
          <ToolButton className="w-[31px]">
            <svg viewBox="0 0 14 14" width="13" height="13" fill="none" stroke="#a8a8a8" strokeWidth="1.500">
              <path d="M6 2.500H3q-2 0-2 2V11q0 2 2 2h6.500q2 0 2-2V8.500" />
              <path d="M4.500 8.500q0-4 5-4" strokeWidth="2" />
              <path d="M9 0.800L13.500 4.300L9 7.800z" fill="#a8a8a8" stroke="none" />
            </svg>
          </ToolButton>
          <ToolButton className="ml-[2px] w-[31px]">
            <svg viewBox="0 0 14 14" width="12" height="12" fill="none" stroke="#a8a8a8" strokeWidth="1.500">
              <path d="M1.500 1.500h8.500l2.500 2.500v8.500h-11zM4 1.500v3.500h5V1.500M4 12.500V8.500h6v4" />
            </svg>
          </ToolButton>
          <ToolButton className="ml-[2px] w-[30px]">
            <svg viewBox="0 0 14 14" width="12" height="12" fill="none" stroke="#a8a8a8">
              <circle cx="7" cy="7" r="3.500" strokeWidth="2.800" />
              <circle cx="7" cy="7" r="5.700" strokeWidth="2" strokeDasharray="2.400 2.080" />
            </svg>
          </ToolButton>
          <ToolButton className="ml-[18px] w-[187px] text-[10.500px] font-medium">
            <svg viewBox="0 0 14 14" width="12" height="12" fill="none" stroke="#a8a8a8" strokeWidth="1.500">
              <circle cx="7" cy="7" r="5.800" />
              <path d="M7 3.500V7.500H4.500" strokeWidth="1.200" />
            </svg>
            <span className="ml-[3px] text-[#a0a0a0]">Previous week</span>
            <span className="ml-[5px] text-[#eb8f1e]">Refresh every 1m</span>
          </ToolButton>
          <ToolButton className="ml-[3px] w-[31px]">
            <svg viewBox="0 0 14 14" width="13" height="13" fill="none" stroke="#a8a8a8" strokeWidth="1.700">
              <circle cx="6" cy="6" r="4.300" />
              <path d="M9 9l4 4M4 6h4" />
            </svg>
          </ToolButton>
          <ToolButton className="ml-[3px] w-[30px]">
            <svg viewBox="0 0 14 14" width="12" height="12" fill="none" stroke="#a8a8a8" strokeWidth="2">
              <path d="M1.800 6Q2.500 2 7 2q2.500 0 4.500 2M12.200 8Q11.500 12 7 12q-2.500 0-4.500-2" />
              <path d="M13 1v5H8zM1 13V8h5z" fill="#a8a8a8" stroke="none" />
            </svg>
          </ToolButton>
        </div>
      </div>
      <div className="ml-[14px] h-[724px] w-[1508px] rounded-[2px] bg-[#212124]">
        <div className="flex h-[29px] items-center justify-center pb-[6px] text-[10px] font-medium">Network</div>
        <div className="flex h-[429px]">
          <div className="-mt-[8px] mr-[4px] flex h-[445px] w-[40px] flex-col justify-between text-right text-[8.900px] font-medium leading-[16px]">
            {Y_LABELS.map((l) => (
              <span key={l}>{l}</span>
            ))}
          </div>
          <Chart />
        </div>
        <div className="ml-[10px] flex w-[1430px] text-[8.700px] font-medium leading-[21px]">
          {X_LABELS.map((l) => (
            <span key={l} className="w-[68.09px] shrink-0 whitespace-nowrap text-center">
              {l}
            </span>
          ))}
        </div>
        <div className="ml-[16px] flex">
          <div className="w-[1475px] text-[9.200px]">
            <div className="flex h-[14px] items-center justify-end font-medium text-[#33b5e5]">
              <span className="w-[90px] text-right">max</span>
              <span className="w-[58px] text-right">avg</span>
              <span className="mr-[7px] w-[58px] text-right">current</span>
            </div>
            {LEGEND.map(([color, name, max, avg, cur], i) => (
              <div key={name} className={"flex h-[19.200px] items-center " + (i % 2 ? "" : "bg-[#262628]")}>
                <span className="ml-[8px] mt-[2px] h-[3px] w-[10px]" style={{ backgroundColor: color }} />
                <span className="ml-[6px] whitespace-nowrap text-[8.850px]">{name}</span>
                <span className="ml-auto w-[90px] text-right">{max}</span>
                <span className="w-[58px] text-right">{avg}</span>
                <span className="mr-[7px] w-[58px] text-right">{cur}</span>
              </div>
            ))}
          </div>
          <div className="mt-[2px] h-[129px] w-[5px] rounded-[2px] bg-gradient-to-b from-[#404057] to-[#424245]" />
        </div>
      </div>
    </div>
  );
}

/* ---------- worksheet ---------- */

const SPECIAL: Record<string, number> = { A: 78, B: 103, C: 157, F: 58, H: 61, W: 92, Z: 60, AU: 64, AX: 53 };
const ALPHA = "ABCDEFGHIJKLMNOPQRSTUVWXYZ".split("");
const COLS = [...ALPHA, ...ALPHA.slice(0, 24).map((c) => "A" + c)].map((name) => ({ name, w: SPECIAL[name] ?? 54 }));
const ROWS = Array.from({ length: 74 }, (_, i) => ({ n: 547 + i, h: i < 7 ? 14 : i === 73 ? 17 : 19 }));

function Sheet() {
  return (
    <div className="relative h-[1385px] w-[2963px] shrink-0 border-b border-[#999] bg-white">
      <div className="flex h-[15px] border-b border-[#999] bg-[#e6e6e6] font-['Liberation_Serif'] text-[12px] text-black">
        <div className="flex h-[14px] w-[23px] shrink-0 items-end justify-end border-r border-[#bbb] pb-[2px] pr-[3px]">
          <svg viewBox="0 0 8 8" width="7" height="8">
            <path d="M8 0v8H0z" fill="#b4b4b4" />
          </svg>
        </div>
        {COLS.map(({ name, w }) => (
          <div
            key={name}
            style={{ width: w }}
            className={
              "flex shrink-0 items-center justify-center border-r border-[#bbb] leading-[12px] " +
              (name === "C" ? "h-[15px] border-b-2 border-b-[#217346] bg-[#d2d2d2] pt-[4px] text-[#217346]" : "h-[14px] pt-[3px]")
            }
          >
            <span className="scale-x-[0.72] [-webkit-text-stroke:0.3px]">{name}</span>
          </div>
        ))}
      </div>
      <div>
        {ROWS.map(({ n, h }) => (
          <div key={n} style={{ height: h }} className="flex border-b border-[#d4d4d4] last:border-b-0">
            <div className="-mb-px flex w-[23px] shrink-0 items-end justify-center border-b border-r border-b-[#c2c2c2] border-r-[#999] bg-[#e6e6e6] pr-[2px] font-['Liberation_Mono'] text-[12.500px] leading-[12px] text-black">
              <span className="scale-x-[0.8]">{n}</span>
            </div>
          </div>
        ))}
      </div>
      <div className="absolute left-[23px] top-[15px] flex h-[1369px]">
        {COLS.map(({ name, w }) => (
          <div key={name} style={{ width: w }} className="h-full shrink-0 border-r border-[#d4d4d4] last:border-[#999]" />
        ))}
      </div>
      <div className="absolute left-[207px] top-[114px] flex h-[17px] items-center bg-white pl-px font-['Liberation_Mono','Noto_Sans_CJK_SC'] text-[14.700px] font-bold leading-[18px] text-black">
        网络Throughput:
      </div>
      <Dashboard />
    </div>
  );
}

function VerticalScroll() {
  return (
    <div className="flex w-[37px] flex-col bg-[#e6e6e6]">
      <div className="ml-px mt-px flex h-[32px] w-[33px] items-center justify-center border border-[#ababab] bg-white">
        <svg viewBox="0 0 18 10" width="17" height="10">
          <path d="M9 0l9 10H0z" fill="#777" />
        </svg>
      </div>
      <div className="ml-px h-[1141px] w-[33px] bg-[#dadada]" />
      <div className="ml-px h-[150px] w-[33px] border border-[#ababab] bg-white" />
      <div className="ml-px h-[29px] w-[33px] bg-[#dadada]" />
      <div className="ml-px flex h-[33px] w-[33px] items-center justify-center border border-[#c6c6c6] bg-white">
        <svg viewBox="0 0 16 8" width="16" height="9">
          <path d="M0 0h16L8 8z" fill="#777" />
        </svg>
      </div>
    </div>
  );
}

function SheetTabs() {
  return (
    <div className="flex h-[41px] border-b border-[#c6c6c6] bg-[#e6e6e6] text-[27px] leading-[36px] text-[#444]">
      <Ic b="30 1816 55 40" className="ml-[30px]">
        <path d="M41 1827v16l-8-8zM74 1827v16l8-8z" fill="#b8b8b8" />
      </Ic>
      <div className="ml-[54px] mt-[3px] h-[33px] w-px bg-[#ababab]" />
      <span className="ml-[11px] w-[120px] whitespace-nowrap">汇总视图</span>
      <div className="mt-[3px] h-[33px] w-px bg-[#ababab]" />
      <span className="ml-[12px] w-[189px] whitespace-nowrap">
        <span className="tracking-[1.500px]">AMQ</span>巡检报告
      </span>
      <div className="mt-[3px] h-[33px] w-px bg-[#ababab]" />
      <span className="ml-[11px] w-[66px] whitespace-nowrap">备注</span>
      <div className="relative -mt-px h-[38px] w-[74px] border-x border-b-[3px] border-x-[#ababab] border-b-[#217346] bg-white text-center leading-[38px] text-[#217346]">MQ</div>
      <Ic b="669 1818 36 38" className="ml-[44px] mt-[2px]">
        <circle cx="687" cy="1837" r="15" stroke="#808080" strokeWidth="1.800" />
        <path d="M679 1837h16M687 1829v16" stroke="#777" strokeWidth="3.600" />
      </Ic>
      <div className="ml-auto mt-[10px] flex w-[4px] flex-col gap-[4px]">
        <i className="h-[4px] w-[4px] bg-[#b0b0b0]" />
        <i className="h-[4px] w-[4px] bg-[#b0b0b0]" />
        <i className="h-[4px] w-[4px] bg-[#b0b0b0]" />
      </div>
      <div className="ml-[20px] mr-[37px] mt-[3px] flex h-[33px] w-[463px] bg-[#dadada]">
        <div className="flex w-[33px] items-center justify-center border border-[#ababab] bg-white">
          <svg viewBox="0 0 8 16" width="9" height="16">
            <path d="M8 0v16L0 8z" fill="#777" />
          </svg>
        </div>
        <div className="-ml-px w-[117px] border border-[#ababab] bg-white" />
        <div className="ml-auto flex w-[33px] items-center justify-center border border-[#ababab] bg-white">
          <svg viewBox="0 0 8 16" width="9" height="16">
            <path d="M0 0v16l8-8z" fill="#777" />
          </svg>
        </div>
      </div>
    </div>
  );
}

function StatusBar() {
  return (
    <div className="flex h-[63px] items-center bg-[#f3f3f3] text-[24px] text-[#333]">
      <Ic b="2260 1857 42 63" className="ml-[2260px]">
        <rect x="2262" y="1873" width="35" height="22" rx="1.500" fill="#505050" />
        <path d="M2270 1904l3-3h4v-3h6v6z" fill="#505050" />
        <circle cx="2290" cy="1897.500" r="8.500" fill="#505050" stroke="#f3f3f3" strokeWidth="1.500" strokeDasharray="4 2.500" />
        <circle cx="2290" cy="1897.500" r="6" stroke="#505050" strokeWidth="4" fill="#f3f3f3" />
      </Ic>
      <span className="w-[152px] whitespace-nowrap leading-[36px]">显示器设置</span>
      <div className="flex h-[63px] w-[66px] items-center justify-center bg-[#c6c6c6]">
        <Ic b="0 0 32 32">
          <path d="M1 1h30v30H1zM11 1v30M21 1v30M1 11h30M1 21h30" stroke="#666" strokeWidth="1.300" />
        </Ic>
      </div>
      <Ic b="0 0 36 32" className="ml-[15px]">
        <path d="M1 1.500h33.500v29H1zM9 5.500h18v21H9zM13 10h10M13 14h10M13 18h10M13 22h10" stroke="#666" strokeWidth="1.300" />
      </Ic>
      <Ic b="0 0 36 32" className="ml-[29px]">
        <path d="M1 1h33.500v30H1zM11.500 1v19M21.500 1v19M1 20h20.500" stroke="#666" strokeWidth="1.300" />
      </Ic>
      <i className="ml-[24px] h-[4px] w-[12px] bg-[#606060]" />
      <Ic b="2682 1872 198 32" className="ml-[9px]">
        <path d="M2682 1888h198" stroke="#b0b0b0" strokeWidth="1.800" />
        <path d="M2781 1883v10" stroke="#b0b0b0" strokeWidth="1.500" />
        <rect x="2713" y="1877" width="10" height="22" fill="#6a6a6a" />
      </Ic>
      <Ic b="2886 1876 18 24" className="ml-[6px]">
        <path d="M2887 1888h16M2895 1880v16" stroke="#606060" strokeWidth="2.800" />
      </Ic>
      <span className="ml-[20px] text-[25px] leading-[36px]">40%</span>
    </div>
  );
}

/* ---------- remote desktop edge ---------- */

function DesktopEdge() {
  return (
    <div className="flex h-[1920px] w-[13px] shrink-0 flex-col bg-black">
      <svg viewBox="0 0 13 18" width="13" height="18" className="block shrink-0">
        <rect width="13" height="18" fill="#0a246a" />
        <path d="M13 4a7 7 0 1 0 0 11v-3a4 4 0 0 1-6-2h6V7.500H7a4 4 0 0 1 6-1z" fill="#5cc3f0" />
        <path d="M2 14Q1 5 12 2.500" stroke="#f1c232" strokeWidth="1.500" fill="none" />
      </svg>
      <svg viewBox="0 0 13 30" width="13" height="30" className="block shrink-0">
        <rect width="13" height="30" fill="#d4d0c8" />
        <circle cx="15" cy="15" r="12" fill="#2f6fc4" stroke="#7c8797" strokeWidth="1.500" />
        <path d="M13 10l-5 5l5 5z" fill="#fff" />
      </svg>
      <div className="h-[225px] shrink-0 bg-gradient-to-b from-[#0059d1] via-[#1a6cc8] via-45% to-white" />
      <div className="h-[763px] shrink-0 bg-white" />
      <div className="flex h-[44px] shrink-0 flex-col border-t border-[#d4d0c8] bg-[#d4d0c8] pl-[2px] pt-[3px]">
        <div className="flex h-[38px] items-center border-b-2 border-l border-t border-b-[#404040] border-l-white border-t-white">
          <svg viewBox="0 0 10 15" width="10" height="15">
            <path d="M3 1q3-2 7 0v6q-4-1.500-8 0z" fill="#e2502a" />
            <path d="M1.500 8q4-1.500 5 0v5.500q-3-1.500-6.500 0z" fill="#4a86d8" />
            <path d="M7.500 8.500h2.500v5H7z" fill="#f4c430" />
          </svg>
        </div>
      </div>
    </div>
  );
}

export default function App() {
  return (
    <div className="h-[1933px] w-[3013px] overflow-hidden bg-black font-['Open_Sans','Noto_Sans_CJK_SC',sans-serif]">
      <div className="flex">
        <main className="flex h-[1920px] w-[3000px] shrink-0 flex-col">
          <header className="relative h-[128px] bg-[#217346]">
            <TitleArt />
            <TitleBar />
            <TabBar />
          </header>
          <Ribbon />
          <FormulaBar />
          <div className="flex h-[1385px]">
            <Sheet />
            <VerticalScroll />
          </div>
          <SheetTabs />
          <StatusBar />
        </main>
        <DesktopEdge />
      </div>
      <footer className="flex h-[13px] border-b border-[#120f18] bg-gradient-to-r from-[#1a1b1e] via-[#23282c] via-60% to-[#171719]">
        <div className="ml-[881px] h-[12px] w-[96px] bg-[#2b313c]" />
        <div className="ml-auto mr-[20px] h-[13px] w-px bg-[#5a5f63]" />
      </footer>
    </div>
  );
}
